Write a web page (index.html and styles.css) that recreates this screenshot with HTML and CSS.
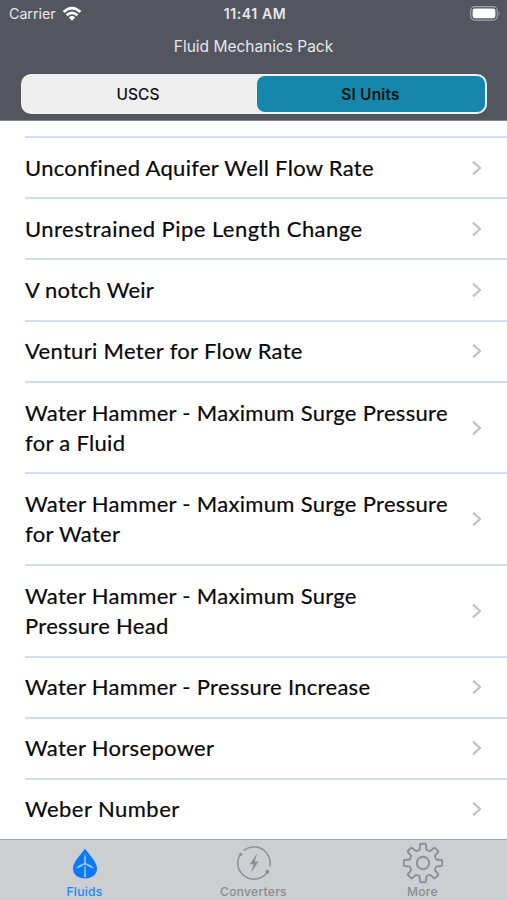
FILE: index.html
```
<!DOCTYPE html>
<html lang="en">
<head>
<meta charset="utf-8">
<title>Fluid Mechanics Pack</title>
<link rel="stylesheet" href="styles.css">
</head>
<body>
<svg class="defs" width="0" height="0">
  <symbol id="chevron" viewBox="0 0 12 16"><path d="M2 1.6 9 8 2 14.4" fill="none" stroke="#c3c3c6" stroke-width="2.2"/></symbol>
  <path id="tooth" d="M-5.4-13C-4-12.2-3.2-13-3.2-15L-3-18.2Q-2.9-19.2-1.9-19.2H1.9Q2.9-19.2 3-18.2L3.2-15C3.2-13 4-12.2 5.4-13"/>
</svg>
<header class="header">
  <div class="status">
    <div class="carrier"><span>Carrier</span>
      <svg width="20" height="16" viewBox="0 0 20 16" fill="none" stroke="#fff" stroke-width="2.7"><path d="M1.6 6.1Q10-1.7 18.4 6.1M4.6 9.3Q10 4.5 15.4 9.3"/><path d="M6.8 11.5Q10 8.7 13.2 11.5L10 14.8Z" fill="#fff" stroke="none"/></svg>
    </div>
    <span class="time">11:41 AM</span>
    <svg class="battery" width="31" height="15" viewBox="0 0 31 15"><rect x=".7" y=".7" width="26.6" height="13.4" rx="4" fill="none" stroke="#a0a2a8" stroke-width="1.2"/><rect x="2.6" y="2.5" width="22.8" height="9.8" rx="2.3" fill="#fff"/><path d="M28.6 5Q30.6 7.4 28.6 9.8Z" fill="#a0a2a8"/></svg>
  </div>
  <h1 class="title">Fluid Mechanics Pack</h1>
  <div class="segments">
    <div class="segment">USCS</div>
    <div class="segment selected">SI Units</div>
  </div>
</header>
<main class="list">
  <div class="row previous"></div>
  <div class="row"><span>Unconfined Aquifer Well Flow Rate</span><svg class="chev"><use href="#chevron"/></svg></div>
  <div class="row"><span class="wide">Unrestrained Pipe Length Change</span><svg class="chev"><use href="#chevron"/></svg></div>
  <div class="row"><span class="narrow">V notch Weir</span><svg class="chev"><use href="#chevron"/></svg></div>
  <div class="row"><span>Venturi Meter for Flow Rate</span><svg class="chev"><use href="#chevron"/></svg></div>
  <div class="row tall"><span>Water Hammer - Maximum Surge Pressure<br>for a Fluid</span><svg class="chev"><use href="#chevron"/></svg></div>
  <div class="row tall"><span>Water Hammer - Maximum Surge Pressure<br>for Water</span><svg class="chev"><use href="#chevron"/></svg></div>
  <div class="row tall"><span>Water Hammer - Maximum Surge<br>Pressure Head</span><svg class="chev"><use href="#chevron"/></svg></div>
  <div class="row"><span>Water Hammer - Pressure Increase</span><svg class="chev"><use href="#chevron"/></svg></div>
  <div class="row"><span>Water Horsepower</span><svg class="chev"><use href="#chevron"/></svg></div>
  <div class="row"><span class="wide">Weber Number</span><svg class="chev"><use href="#chevron"/></svg></div>
</main>
<nav class="tabs">
  <div class="tab active">
    <svg width="42" height="42" viewBox="-21 -21 42 42"><path d="M0-14.5C3-9.5 12-1.5 12 5.5C12 12 6.5 15.5 0 15.5S-12 12-12 5.5C-12-1.5-3-9.5 0-14.5Z" fill="#0a7bf8"/><g fill="#a9c9ee"><path d="M-.6 0-.9-5 0-9.2 .9-5 .6 0Z"/><path d="M-.4 1.2-5 4.2-9.4 5.4-6 2.6-1 .3Z"/><path d="M.4 1.2 5 4.2 9.4 5.4 6 2.6 1 .3Z"/><path d="M-.5 3H.5L.9 14.3H-.9Z"/><circle r="1.2" cy=".7"/></g></svg>
    <span>Fluids</span>
  </div>
  <div class="tab">
    <svg width="42" height="42" viewBox="-21 -21 42 42" fill="none" stroke="#8e8f94" stroke-width="1.5"><path d="M-10.5-12.3A16.2 16.2 0 0 1 15.8 3.6M13.8 8.4A16.2 16.2 0 0 1-11.8 11.1M-11.8 11.1A16.2 16.2 0 0 1-13.5-9"/><circle cx="-13.1" cy="-8.7" r="1.5" fill="#8e8f94" stroke="none"/><circle cx="13.4" cy="8.8" r="2" fill="#8e8f94" stroke="none"/><path d="M3.3-10-4.2 1.2H-.5L-3 10 4.5-1.5H.7Z" fill="#8e8f94" stroke="none"/></svg>
    <span>Converters</span>
  </div>
  <div class="tab">
    <svg width="42" height="42" viewBox="-21 -21 42 42" fill="none" stroke="#8e8f94" stroke-width="1.9" stroke-linejoin="round"><use href="#tooth"/><use href="#tooth" transform="rotate(45)"/><use href="#tooth" transform="rotate(90)"/><use href="#tooth" transform="rotate(135)"/><use href="#tooth" transform="rotate(180)"/><use href="#tooth" transform="rotate(225)"/><use href="#tooth" transform="rotate(270)"/><use href="#tooth" transform="rotate(315)"/><circle r="6.2"/></svg>
    <span>More</span>
  </div>
</nav>
</body>
</html>
```
FILE: styles.css
```
* { box-sizing: border-box; }
body { margin: 0; width: 507px; height: 900px; display: flex; flex-direction: column; overflow: hidden; background: #fff; font-family: Inter, sans-serif; }
.defs { display: block; flex: none; }
.header { height: 121px; flex: none; background: #53565f; color: #e6e7ea; border-bottom: 1px solid #85868d; }
.status { height: 27px; display: grid; grid-template-columns: 1fr auto 1fr; align-items: center; padding: 0 6px 0 9px; font-size: 14.3px; }
.carrier { display: flex; align-items: center; gap: 6px; letter-spacing: -.05px; }
.time { font-weight: 600; font-size: 14px; letter-spacing: .6px; }
.battery { justify-self: end; }
.title { margin: 0; height: 39px; line-height: 40px; text-align: center; font-size: 15.5px; font-weight: 400; letter-spacing: -.02px; }
.segments { margin: 8px 20px 0 21px; height: 40px; padding: 2px; display: grid; grid-template-columns: 234px 1fr; background: #efefef; border-radius: 10px; color: #111; }
.segment { display: flex; align-items: center; justify-content: center; font-size: 15.5px; font-weight: 500; padding-right: 1px; }
.segment:first-child { padding-right: 4px; }
.selected { background: #1687aa; border-radius: 8px; font-weight: 600; letter-spacing: .2px; }
.list { flex: 1; min-height: 0; overflow: hidden; padding-left: 25px; }
.row { height: 61.1px; display: flex; align-items: center; justify-content: space-between; padding-right: 24px; border-bottom: 2px solid #d2deeb; color: #090909; font: 22px/30px Lato, sans-serif; white-space: nowrap; letter-spacing: .31px; -webkit-text-stroke: .2px #090909; }
.wide { letter-spacing: .46px; }
.narrow { letter-spacing: .18px; }
.previous { height: 17.3px; }
.tall { height: 91.7px; }
.chev { width: 12px; height: 16px; flex: none; }
.tabs { height: 61px; flex: none; display: grid; grid-template-columns: repeat(3, 1fr); background: #cdced2; border-top: 1px solid #a3a4a8; }
.tab { display: flex; flex-direction: column; align-items: center; padding-top: 2px; color: #8a8b90; font-size: 12px; font-weight: 500; letter-spacing: .3px; }
.tab svg { flex: none; }
.tab span { line-height: 15px; }
.active { color: #2186f2; }
```
